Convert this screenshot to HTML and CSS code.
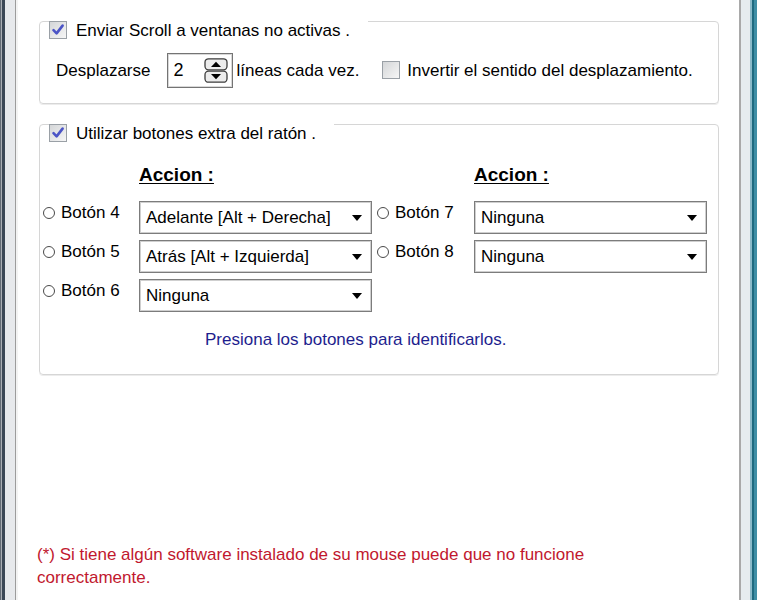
FILE: index.html
```html
<!DOCTYPE html>
<html lang="es">
<head>
<meta charset="utf-8">
<title>Opciones del ratón</title>
<link rel="stylesheet" href="styles.css">
</head>
<body>
<div class="window">
  <div class="frame-left"></div>
  <div class="content">
    <div class="group g1">
      <div class="legend">
        <span class="check checked"><svg viewBox="0 0 18 18" width="18" height="18"><path d="M4.5 9.2 L7.6 12.4 L13.6 4.6" fill="none" stroke="#4b54c6" stroke-width="2.6" stroke-linecap="round" stroke-linejoin="round"/></svg></span>
        <span class="legend-text">Enviar Scroll a ventanas no activas .</span>
      </div>
      <div class="scroll-row">
        <span class="lbl-desp">Desplazarse</span>
        <div class="spin">
          <span class="spin-val">2</span>
          <svg class="spin-btns" viewBox="0 0 24 25" width="24" height="25">
            <rect x="1" y="0.8" width="22" height="11" rx="3.5" fill="#ececec" stroke="#3c3c3c" stroke-width="1.3"/>
            <rect x="1" y="13.2" width="22" height="11" rx="3.5" fill="#ececec" stroke="#3c3c3c" stroke-width="1.3"/>
            <path d="M7 9 L12 3.8 L17 9 Z" fill="#000"/>
            <path d="M7 16 L12 21.2 L17 16 Z" fill="#000"/>
          </svg>
        </div>
        <span class="lbl-lineas">líneas cada vez.</span>
        <span class="check"></span>
        <span class="lbl-invert">Invertir el sentido del desplazamiento.</span>
      </div>
    </div>

    <div class="group g2">
      <div class="legend">
        <span class="check checked"><svg viewBox="0 0 18 18" width="18" height="18"><path d="M4.5 9.2 L7.6 12.4 L13.6 4.6" fill="none" stroke="#4b54c6" stroke-width="2.6" stroke-linecap="round" stroke-linejoin="round"/></svg></span>
        <span class="legend-text">Utilizar botones extra del ratón .</span>
      </div>
      <div class="buttons-grid">
        <div class="accion r1 c2">Accion :</div>
        <div class="accion r1 c4">Accion :</div>

        <div class="btn-label r2 c1"><span class="radio"></span>Botón 4</div>
        <div class="combo r2 c2"><span>Adelante [Alt + Derecha]</span><span class="arrow"></span></div>
        <div class="btn-label r2 c3"><span class="radio"></span>Botón 7</div>
        <div class="combo r2 c4"><span>Ninguna</span><span class="arrow"></span></div>

        <div class="btn-label r3 c1"><span class="radio"></span>Botón 5</div>
        <div class="combo r3 c2"><span>Atrás [Alt + Izquierda]</span><span class="arrow"></span></div>
        <div class="btn-label r3 c3"><span class="radio"></span>Botón 8</div>
        <div class="combo r3 c4"><span>Ninguna</span><span class="arrow"></span></div>

        <div class="btn-label r4 c1"><span class="radio"></span>Botón 6</div>
        <div class="combo r4 c2"><span>Ninguna</span><span class="arrow"></span></div>
      </div>
      <div class="hint">Presiona los botones para identificarlos.</div>
    </div>

    <div class="warning">(*) Si tiene algún software instalado de su mouse puede que no funcione<br>correctamente.</div>
  </div>
  <div class="frame-right"></div>
</div>
</body>
</html>
```

FILE: styles.css
```css
html, body {
  margin: 0;
  padding: 0;
}
body {
  font-family: "Liberation Sans", Arial, sans-serif;
  font-size: 17px;
  color: #000;
  background: #fff;
}
.window {
  display: flex;
  height: 600px;
  overflow: hidden;
}
.frame-left {
  width: 18px;
  flex: none;
  background: linear-gradient(to right,
    #626b75 0 1px, #a9aeb4 1px 2px, #3b4856 2px 5px,
    #e7e9ec 5px 15px, #9c9c9c 15px 16px, #f3f3f3 16px 18px);
}
.frame-right {
  width: 18px;
  flex: none;
  background: linear-gradient(to right,
    #a9a9a9 0 2px, #e6ecef 2px 11px, #8bbac9 11px 13px,
    #1f6a80 13px 15px, #3e8ea5 15px 18px);
}
.content {
  flex: 1;
  display: flex;
  flex-direction: column;
  padding: 21px 20px 11px 21px;
  background: #fff;
}
.group {
  border: 1px solid #d6d6d6;
  border-radius: 4px;
  box-shadow: 0 1px 0 #ececec;
}
.legend {
  display: flex;
  align-items: center;
  width: max-content;
  margin: -1px 0 0 9px;
  padding-right: 18px;
  height: 18px;
  background: #fff;
}
.legend-text {
  margin-left: 9px;
  line-height: 18px;
  padding-top: 1px;
}
.check {
  width: 18px;
  height: 18px;
  box-sizing: border-box;
  border: 1px solid #9aa0a6;
  background: linear-gradient(135deg, #d4d6d8, #f6f6f6);
  display: inline-block;
  flex: none;
}
.check svg {
  display: block;
  margin: -1px;
}
.g1 {
  padding-bottom: 15px;
}
.scroll-row {
  display: flex;
  align-items: center;
  margin-top: 14px;
  padding-left: 16px;
  height: 35px;
}
.spin {
  margin-left: 16px;
  width: 66px;
  height: 35px;
  box-sizing: border-box;
  border: 1px solid #747474;
  box-shadow: inset 0 0 0 1px #d8d8d8;
  display: flex;
  align-items: center;
  justify-content: space-between;
  padding: 0 4px 0 6px;
}
.spin-val {
  font-size: 18px;
}
.spin-btns {
  display: block;
}
.lbl-lineas {
  margin-left: 4px;
}
.scroll-row .check {
  margin-left: 23px;
  margin-top: -2px;
}
.lbl-invert {
  margin-left: 7px;
}
.g2 {
  margin-top: 20px;
  padding-bottom: 24px;
}
.buttons-grid {
  display: grid;
  grid-template-columns: 96px 233px 102px 233px;
  grid-template-rows: 31px 33px 33px 33px;
  row-gap: 6px;
  margin-top: 22px;
  padding-left: 3px;
}
.r1 { grid-row: 1; }
.r2 { grid-row: 2; }
.r3 { grid-row: 3; }
.r4 { grid-row: 4; }
.c1 { grid-column: 1; }
.c2 { grid-column: 2; }
.c3 { grid-column: 3; padding-left: 5px; }
.c4 { grid-column: 4; }
.accion {
  align-self: start;
  font-weight: bold;
  font-size: 19px;
  text-decoration: underline;
  text-underline-offset: 2px;
  line-height: 22px;
}
.btn-label {
  display: flex;
  align-items: center;
  align-self: start;
  line-height: 20px;
  padding-top: 2px;
}
.radio {
  width: 12px;
  height: 12px;
  box-sizing: border-box;
  border: 1.5px solid #4a4a4a;
  border-radius: 50%;
  background: #fff;
  margin-right: 6px;
  flex: none;
}
.combo {
  display: flex;
  align-items: center;
  justify-content: space-between;
  box-sizing: border-box;
  height: 33px;
  border: 1px solid #7c7c7c;
  box-shadow: inset 0 0 0 1px #cfcfcf;
  padding: 1px 9px 0 6px;
  background: #fff;
}
.arrow {
  width: 0;
  height: 0;
  border-left: 5px solid transparent;
  border-right: 5px solid transparent;
  border-top: 6px solid #000;
}
.hint {
  margin-top: 18px;
  margin-left: 165px;
  line-height: 20px;
  color: #1e1e8e;
}
.warning {
  margin-top: auto;
  margin-left: -2px;
  line-height: 23px;
  color: #c1182e;
}
```
